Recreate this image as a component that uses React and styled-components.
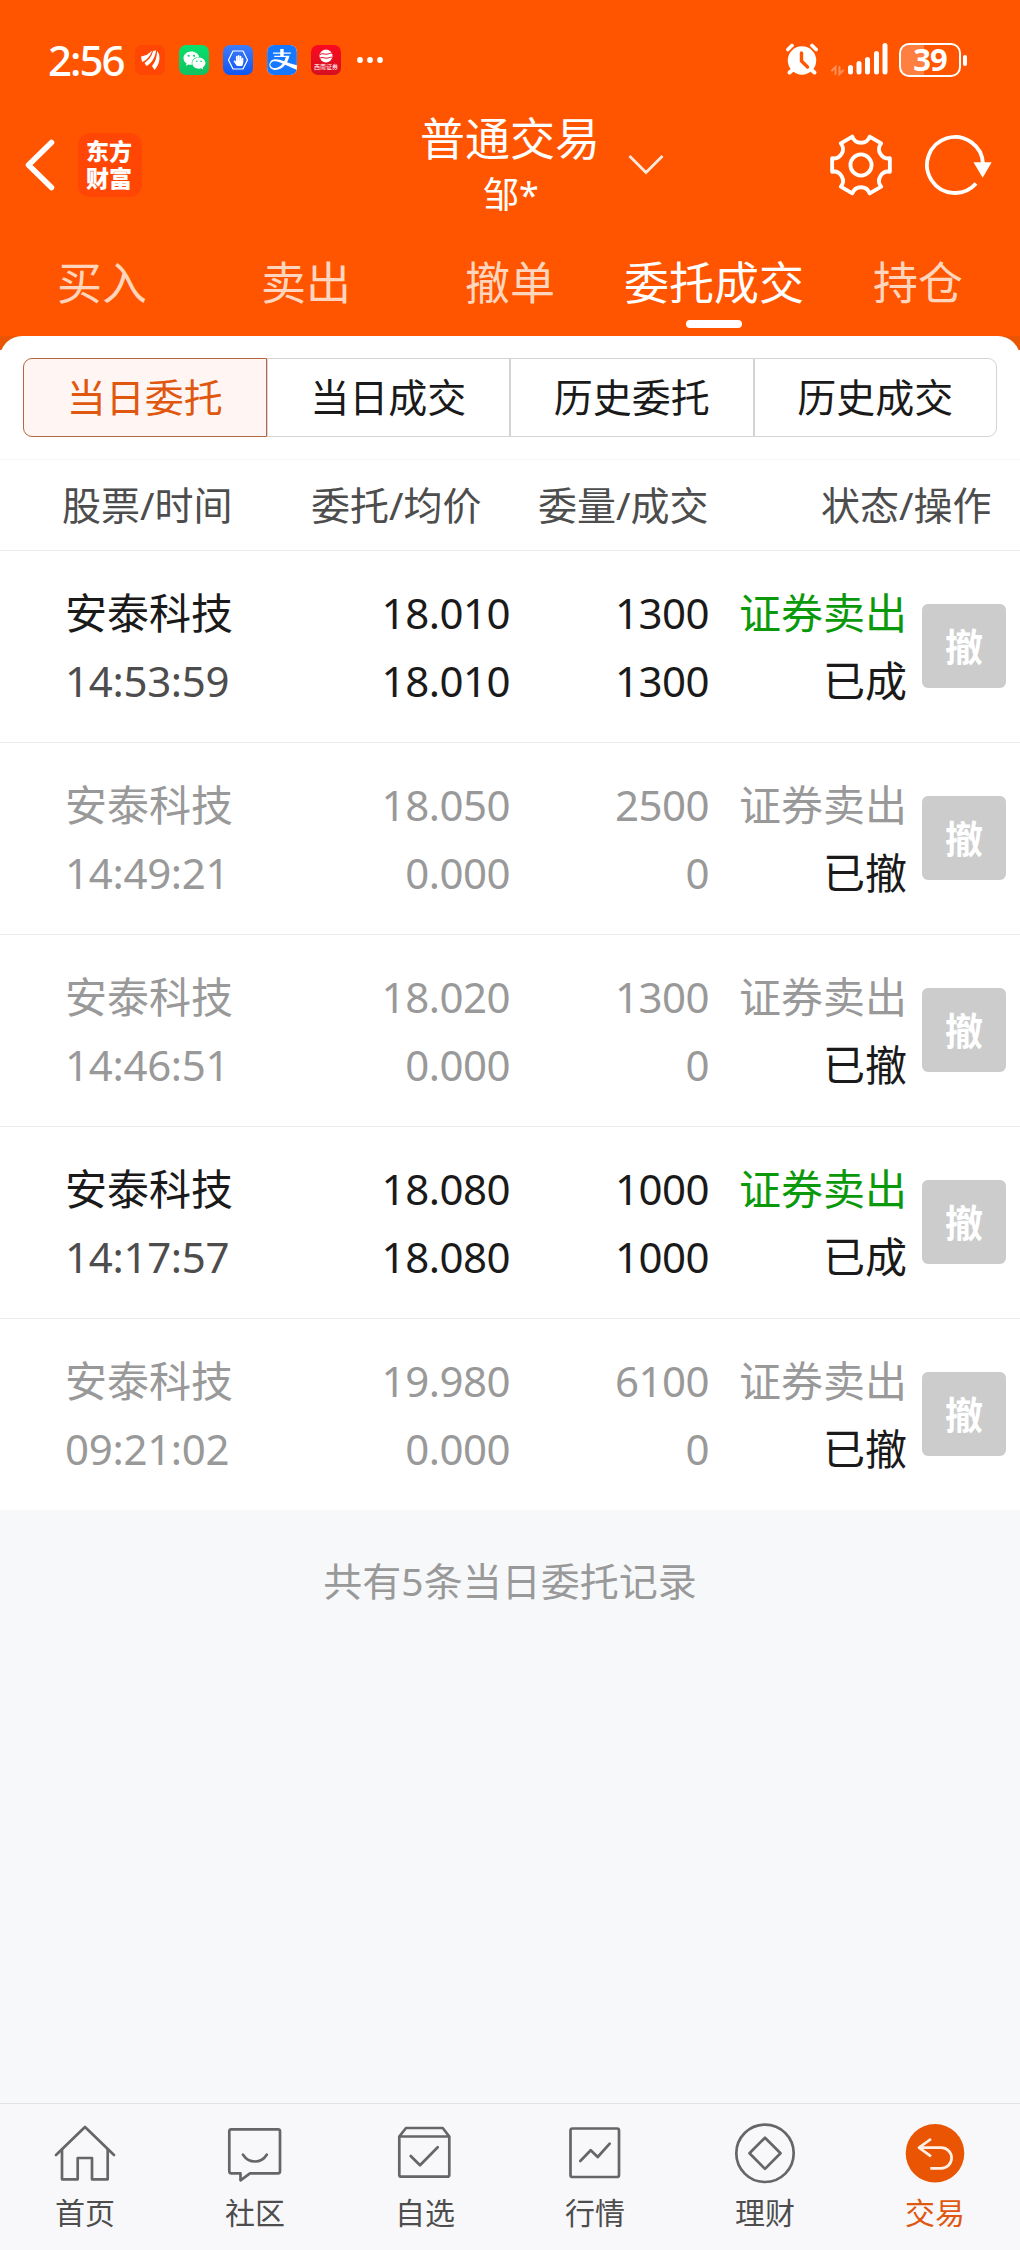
import React from 'react';
import styled, { createGlobalStyle } from 'styled-components';
import { FaWeixin, FaHandPaper } from 'react-icons/fa';
import { SiAlipay } from 'react-icons/si';

const COLORS = {
  primary: '#ff5500',
  primaryDark: '#ea5504',
  text: '#1a1a1a',
  subtext: '#4d4d4d',
  muted: '#999',
  sell: '#0a990a',
  line: '#ececec',
  border: '#d2d4d8',
  page: '#f7f8fa',
};

const TABS = ['买入', '卖出', '撤单', '委托成交', '持仓'];
const SEGMENTS = ['当日委托', '当日成交', '历史委托', '历史成交'];

const ORDERS = [
  { name: '安泰科技', time: '14:53:59', price: '18.010', avg: '18.010', qty: '1300', filled: '1300', side: '证券卖出', status: '已成', done: true },
  { name: '安泰科技', time: '14:49:21', price: '18.050', avg: '0.000', qty: '2500', filled: '0', side: '证券卖出', status: '已撤' },
  { name: '安泰科技', time: '14:46:51', price: '18.020', avg: '0.000', qty: '1300', filled: '0', side: '证券卖出', status: '已撤' },
  { name: '安泰科技', time: '14:17:57', price: '18.080', avg: '18.080', qty: '1000', filled: '1000', side: '证券卖出', status: '已成', done: true },
  { name: '安泰科技', time: '09:21:02', price: '19.980', avg: '0.000', qty: '6100', filled: '0', side: '证券卖出', status: '已撤' },
];

const NAV = [
  { label: '首页', icon: HomeIcon },
  { label: '社区', icon: ChatIcon },
  { label: '自选', icon: BoxIcon },
  { label: '行情', icon: ChartIcon },
  { label: '理财', icon: CoinIcon },
  { label: '交易', icon: TradeIcon, active: true },
];

const App = () => {
  return (
    <Page>
      <GlobalStyle />
      <Header>
        <StatusBar />
        <TitleBar>
          <TitleSide>
            <BackIcon />
            <Brand>东方财富</Brand>
          </TitleSide>
          <Titles>
            <Title>普通交易</Title>
            <Subtitle>邹*</Subtitle>
          </Titles>
          <TitleActions>
            <ChevronIcon />
            <GearIcon />
            <RefreshIcon />
          </TitleActions>
        </TitleBar>
        <Tabs>
          {TABS.map((tab) => (
            <Tab key={tab} $active={tab === '委托成交'}>{tab}</Tab>
          ))}
        </Tabs>
      </Header>
      <SheetBacking>
        <Sheet>
          <Segments>
            {SEGMENTS.map((label, i) => (
              <Segment key={label} $active={i === 0}>{label}</Segment>
            ))}
          </Segments>
          <TableHead>
            <span>股票/时间</span>
            <span>委托/均价</span>
            <span>委量/成交</span>
            <span>状态/操作</span>
          </TableHead>
          {ORDERS.map((order) => (
            <OrderRow key={order.time} order={order} />
          ))}
        </Sheet>
      </SheetBacking>
      <Summary>共有5条当日委托记录</Summary>
      <BottomNav>
        {NAV.map(({ label, icon: Icon, active }) => (
          <NavItem key={label} $active={active}>
            <Icon />
            {label}
          </NavItem>
        ))}
      </BottomNav>
    </Page>
  );
};

const StatusBar = () => (
  <StatusWrapper>
    <Clock>2:56</Clock>
    <AppIcons>
      <AppIcon $bg="#ff4605">
        <svg width="30" height="30" viewBox="0 0 30 30" fill="#fff">
          <path d="M6 11.500C10 11 14 9 17 5.500C15.500 11 12 15 7 17Z" />
          <path d="M18 6C19 6 20 5.500 21 5C20.500 12 17 18 11.500 21L9.500 18C14 15 17 11 18 6Z" />
          <path d="M22 6L24 9C25.500 16 23 21 19.500 25L17 21C20.500 17 22 12 22 6Z" />
        </svg>
      </AppIcon>
      <AppIcon $bg="linear-gradient(#08e06c, #12c160)">
        <FaWeixin size={23} color="#fff" />
      </AppIcon>
      <AppIcon $bg="linear-gradient(#3f7dfa, #0f55f2)">
        <HexBadge width="30" height="30" viewBox="0 0 30 30">
          <path d="M10 6H20L24.500 15L20 24H10L5.500 15Z" fill="none" stroke="#fff" strokeWidth="1.200" strokeLinejoin="round" />
        </HexBadge>
        <FaHandPaper size={11} color="#fff" />
      </AppIcon>
      <AppIcon $bg="#fff">
        <SiAlipay size={30} color="#1677ff" />
      </AppIcon>
      <AppIcon $bg="linear-gradient(#fb0a20, #d51020)">
        <BrokerMark>
          <svg width="14" height="14" viewBox="0 0 14 14">
            <circle cx="7" cy="7" r="6.500" fill="#fff" />
            <path d="M1 5.500C4 3.500 6 6 9 5S12 4 13 4.500M1 9C4 7.500 6 10 9 9S12 8 13 8.500" fill="none" stroke="#ea0c20" strokeWidth="1" />
          </svg>
          <span>西南证券</span>
        </BrokerMark>
      </AppIcon>
    </AppIcons>
    <svg width="26" height="8" viewBox="0 0 26 8" fill="#fff">
      <circle cx="3" cy="4" r="2.900" />
      <circle cx="13" cy="4" r="2.900" />
      <circle cx="23" cy="4" r="2.900" />
    </svg>
    <StatusRight>
      <svg width="34" height="34" viewBox="0 0 34 34" fill="none" stroke="#fff" strokeLinecap="round">
        <circle cx="17" cy="17.500" r="14.200" fill="#fff" stroke="none" />
        <path d="M2.800 6.500L7 2.500M31.200 6.500L27 2.500" strokeWidth="3.600" />
        <path d="M7.500 27L4.500 29.500M26.500 27L29.500 29.500" strokeWidth="4" />
        <path d="M16.500 10V18L22.500 24" stroke={COLORS.primary} strokeWidth="3.400" />
      </svg>
      <SignalIcon />
      <Battery>
        <BatteryBody>39</BatteryBody>
        <BatteryNub />
      </Battery>
    </StatusRight>
  </StatusWrapper>
);

const SignalIcon = () => (
  <SignalSvg viewBox="0 0 58 34">
    <path d="M5.500 31V24L2 27.500M9.500 24V31L13 27.500" opacity="0.350" strokeWidth="2" />
    <path d="M20.500 29V24.500M29 29V20.500M37.500 29V16.500M46.500 29V10.500M55 29V2.500" strokeWidth="5" />
  </SignalSvg>
);

const OrderRow = ({ order }) => (
  <Row $done={order.done}>
    <Cell>
      <span>{order.name}</span>
      <Time $done={order.done}>{order.time}</Time>
    </Cell>
    <Cell $right>
      <Amount>{order.price}</Amount>
      <Amount>{order.avg}</Amount>
    </Cell>
    <Cell $right>
      <Amount>{order.qty}</Amount>
      <Amount>{order.filled}</Amount>
    </Cell>
    <Cell $right>
      <Side $done={order.done}>{order.side}</Side>
      <Status>{order.status}</Status>
    </Cell>
    <CancelButton>撤</CancelButton>
  </Row>
);

const BackIcon = () => (
  <svg width="30" height="52" viewBox="0 0 30 52" fill="none" stroke="#fff" strokeWidth="5.500" strokeLinecap="round" strokeLinejoin="round">
    <path d="M26.500 3.500L3.500 26L26.500 48.500" />
  </svg>
);

const ChevronIcon = () => (
  <svg width="36" height="22" viewBox="0 0 36 22" fill="none" stroke="#ffe9dc" strokeWidth="2.800">
    <path d="M1.500 2L18 18.500L34.500 2" />
  </svg>
);

const GearIcon = () => (
  <svg width="66" height="66" viewBox="-34.300 -34.300 68.600 68.600" fill="none" stroke="#fff" strokeWidth="4" strokeLinejoin="round">
    <path d="M30 -7V7A9.550 9.550 0 0 0 21 22.500L9 29.500A9.550 9.550 0 0 0 -9 29.500L-21 22.500A9.550 9.550 0 0 0 -30 7V-7A9.550 9.550 0 0 0 -21 -22.500L-9 -29.500A9.550 9.550 0 0 0 9 -29.500L21 -22.500A9.550 9.550 0 0 0 30 -7Z" />
    <circle r="11" />
  </svg>
);

const RefreshIcon = () => (
  <svg width="76" height="66" viewBox="-33 -33 76 66" fill="none" stroke="#fff" strokeWidth="3.800">
    <path d="M28 -1A28 28 0 1 0 21 18.500" />
    <path d="M18.500 -2.700H36.700L27.700 12.700Z" fill="#fff" stroke="none" />
  </svg>
);

function HomeIcon() {
  return (
    <NavSvg viewBox="-32 -32 64 64">
      <path d="M-29 2L0 -26L29 2" />
      <path d="M-23 -3.700V26.300H-7.300V5H7V26.300H22.700V-3.700" />
    </NavSvg>
  );
}

function ChatIcon() {
  return (
    <NavSvg viewBox="-32 -32 64 64">
      <path d="M-23.700 -23.700H23Q25 -23.700 25 -21.700V18.300Q25 20.300 23 20.300H-5L-14.500 27.300V20.300H-23.700Q-25.700 20.300 -25.700 18.300V-21.700Q-25.700 -23.700 -23.700 -23.700Z" />
      <path d="M-12 1.700Q-7.500 8.500 0 8.500T11.700 1.700" />
    </NavSvg>
  );
}

function BoxIcon() {
  return (
    <NavSvg viewBox="-32 -32 64 64">
      <path d="M-25.700 -16.500L-19 -25H17.700L24.300 -16.500V21.700Q24.300 23.700 22.300 23.700H-23.700Q-25.700 23.700 -25.700 21.700ZH24.300" />
      <path d="M-14.300 3L-5 12.300L12.700 -5.700" />
    </NavSvg>
  );
}

function ChartIcon() {
  return (
    <NavSvg viewBox="-32 -32 64 64">
      <rect x="-24.500" y="-24.500" width="48.500" height="48.500" rx="2" />
      <path d="M-14.700 8L-4.300 -2.700L2.700 4L14.700 -9.300" />
    </NavSvg>
  );
}

function CoinIcon() {
  return (
    <NavSvg viewBox="-32 -32 64 64">
      <circle cy="0.300" r="28.700" />
      <path d="M0 -15.300L15.500 0.300L0 15.900L-15.500 0.300Z" />
    </NavSvg>
  );
}

function TradeIcon() {
  return (
    <NavSvg viewBox="-32 -32 64 64">
      <circle cy="0.300" r="29.300" fill="#ea5504" stroke="none" />
      <path d="M-4 -14L-16 -5.300L-4 3.400M-16 -5.300H6.300A10.300 10.300 0 0 1 6.300 15.300H-4.700" stroke="#fff0e6" strokeLinecap="butt" />
    </NavSvg>
  );
}

const GlobalStyle = createGlobalStyle`
  * {
    box-sizing: border-box;
  }

  body {
    margin: 0;
    background: ${COLORS.page};
    font-family: 'Noto Sans', 'Noto Sans CJK SC', sans-serif;
  }

  svg {
    display: block;
    flex-shrink: 0;
  }
`;

const Page = styled.div`
  display: flex;
  flex-direction: column;
  width: 1020px;
  height: 2250px;
  background: ${COLORS.page};
  color: ${COLORS.text};
`;

const Header = styled.header`
  height: 336px;
  background: ${COLORS.primary};
  color: #fff;
`;

const StatusWrapper = styled.div`
  display: flex;
  align-items: center;
  height: 80px;
  padding: 40px 53px 0 48px;
`;

const Clock = styled.div`
  width: 87px;
  font-size: 42px;
  font-weight: 500;
  letter-spacing: -2px;
  line-height: 40px;
  white-space: nowrap;
`;

const AppIcons = styled.div`
  display: flex;
  gap: 14px;
  margin-right: 16px;
`;

const AppIcon = styled.div`
  position: relative;
  display: flex;
  align-items: center;
  justify-content: center;
  width: 30px;
  height: 30px;
  border-radius: 7px;
  background: ${p => p.$bg};
  overflow: hidden;
`;

const HexBadge = styled.svg`
  position: absolute;
  top: 0;
  left: 0;
`;

const BrokerMark = styled.div`
  display: flex;
  flex-direction: column;
  align-items: center;
  font-size: 6px;
  line-height: 9px;
  white-space: nowrap;
`;

const StatusRight = styled.div`
  display: flex;
  align-items: center;
  margin-left: auto;
`;

const SignalSvg = styled.svg`
  width: 58px;
  height: 34px;
  margin-left: 11px;
  fill: none;
  stroke: #fff;
  stroke-linecap: round;
`;

const Battery = styled.div`
  display: flex;
  align-items: center;
  gap: 2px;
  margin-left: 11px;
`;

const BatteryBody = styled.div`
  width: 62px;
  height: 34px;
  border: 2px solid #fff;
  border-radius: 10px;
  background: linear-gradient(90deg, #ff7f40 39%, transparent 39%);
  font-size: 31px;
  font-weight: 700;
  letter-spacing: -1px;
  line-height: 28px;
  text-align: center;
`;

const BatteryNub = styled.div`
  width: 4px;
  height: 11px;
  border-radius: 2px;
  background: #fff;
`;

const TitleBar = styled.div`
  display: grid;
  grid-template-columns: 400px 218px 1fr;
  align-items: center;
  height: 170px;
`;

const TitleSide = styled.div`
  display: flex;
  align-items: center;
  gap: 23px;
  padding-left: 25px;
`;

const Brand = styled.div`
  width: 64px;
  height: 64px;
  padding: 5px 8px;
  border-radius: 12px;
  background: #ff4605;
  font-size: 23px;
  font-weight: 900;
  line-height: 27px;
`;

const Titles = styled.div`
  padding-left: 2px;
  text-align: center;
`;

const Title = styled.h1`
  margin: 0;
  font-size: 45px;
  font-weight: 400;
  line-height: 60px;
`;

const Subtitle = styled.div`
  padding-left: 2px;
  font-size: 36px;
  line-height: 52px;
`;

const TitleActions = styled.div`
  display: flex;
  align-items: center;
  padding-left: 10px;

  & > :nth-child(2) {
    margin-left: 164px;
  }

  & > :nth-child(3) {
    margin-left: 28px;
  }
`;

const Tabs = styled.nav`
  display: grid;
  grid-template-columns: repeat(5, 1fr);
  height: 86px;
`;

const Tab = styled.div`
  display: flex;
  flex-direction: column;
  align-items: center;
  font-size: 45px;
  line-height: 66px;
  color: ${p => p.$active ? '#fff' : '#ffd5bd'};

  &::after {
    content: '';
    width: 56px;
    height: 8px;
    margin-top: 4px;
    border-radius: 4px;
    background: ${p => p.$active ? '#fff' : 'transparent'};
  }
`;

/* Darker strip that shows behind the rounded corners of the sheet */
const SheetBacking = styled.div`
  background: linear-gradient(${COLORS.primaryDark} 14px, #fff 14px);
`;

const Sheet = styled.main`
  height: 1174px;
  padding-top: 22px;
  border-radius: 22px 22px 0 0;
  background: #fff;
`;

const Segments = styled.div`
  display: grid;
  grid-template-columns: repeat(4, 1fr);
  height: 79px;
  margin: 0 23px;
`;

const Segment = styled.div`
  border: 1px solid ${p => p.$active ? '#b5683f' : COLORS.border};
  background: ${p => p.$active ? '#fff6f3' : '#fff'};
  color: ${p => p.$active ? '#e0570f' : COLORS.text};
  font-size: 39px;
  line-height: 76px;
  text-align: center;

  &:first-child {
    border-radius: 9px 0 0 9px;
  }

  &:last-child {
    border-radius: 0 9px 9px 0;
  }
`;

const TableHead = styled.div`
  display: grid;
  grid-template-columns: 249px 227px 283px 170px;
  height: 92px;
  margin-top: 22px;
  padding-left: 62px;
  border-top: 1px solid #f8f8f8;
  border-bottom: 1px solid ${COLORS.line};
  color: ${COLORS.subtext};
  font-size: 39px;
  line-height: 90px;
  white-space: nowrap;
`;

const Row = styled.div`
  display: grid;
  grid-template-columns: 244px 201px 199px 198px 99px;
  align-items: center;
  height: 192px;
  padding-left: 65px;
  border-bottom: 1px solid ${COLORS.line};
  color: ${p => p.$done ? COLORS.text : COLORS.muted};
  font-size: 42px;
  line-height: 68px;

  &:last-child {
    border-bottom: 0;
    height: 191px;
  }
`;

const Cell = styled.div`
  display: flex;
  flex-direction: column;
  align-items: ${p => p.$right ? 'flex-end' : 'flex-start'};
  white-space: nowrap;
`;

const Amount = styled.span`
  letter-spacing: -0.5px;
`;

const Time = styled.span`
  letter-spacing: -0.3px;
  color: ${p => p.$done ? COLORS.subtext : COLORS.muted};
`;

const Side = styled.span`
  color: ${p => p.$done ? COLORS.sell : COLORS.muted};
`;

const Status = styled.span`
  color: ${COLORS.text};
`;

const CancelButton = styled.button`
  width: 84px;
  height: 84px;
  margin: 0 0 1px 15px;
  padding: 0;
  border: 0;
  border-radius: 6px;
  background: #ccc;
  color: #fff;
  font-family: inherit;
  font-size: 38px;
  font-weight: 700;
  line-height: 82px;
`;

const Summary = styled.p`
  margin: 44px 0 0;
  color: ${COLORS.muted};
  font-size: 39px;
  line-height: 54px;
  text-align: center;
`;

const BottomNav = styled.nav`
  display: grid;
  grid-template-columns: repeat(6, 1fr);
  height: 147px;
  margin-top: auto;
  border-top: 1px solid #e3e3e5;
  background: #f8f8fb;
`;

const NavItem = styled.div`
  display: flex;
  flex-direction: column;
  align-items: center;
  padding-top: 17px;
  font-size: 30px;
  line-height: 55px;
  color: ${p => p.$active ? '#e0570f' : COLORS.subtext};
`;

const NavSvg = styled.svg`
  width: 64px;
  height: 64px;
  fill: none;
  stroke: #666;
  stroke-width: 2.7px;
  stroke-linecap: round;
  stroke-linejoin: round;
`;

export default App;
